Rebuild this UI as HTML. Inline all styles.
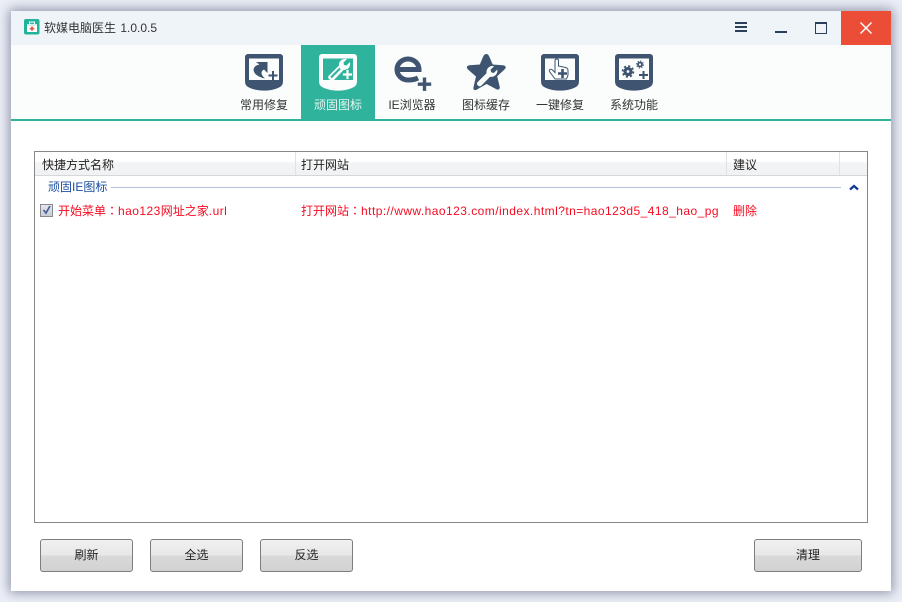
<!DOCTYPE html>
<html><head><meta charset="utf-8">
<style>
html,body{margin:0;padding:0}
body{width:902px;height:602px;overflow:hidden;position:relative;background:#eceff7;font-family:"Liberation Sans","WenQuanYi Zen Hei","Noto Sans CJK SC",sans-serif;font-size:12px;color:#222}
div{position:absolute;white-space:nowrap}
#win{left:11px;top:11px;width:880px;height:580px;background:#fff;box-shadow:0 0 11px 2px #8f95a8}
.tab{top:98px;width:74px;text-align:center;line-height:14px;color:#333}
.btn{top:539px;height:31px;border:1px solid #7d7d7d;border-radius:3px;background:linear-gradient(#f0f0f0 0,#e8e8e8 48%,#d9d9d9 52%,#d2d2d2 100%);text-align:center;line-height:31px;color:#222}
.l{letter-spacing:.45px}
.c{font-family:"Noto Sans CJK TC",sans-serif}
svg{position:absolute;overflow:visible}
</style></head><body>
<div id="win"></div>
<div style="left:11px;top:11px;width:880px;height:34px;background:#eff4f9"></div>
<div style="left:11px;top:45px;width:880px;height:74px;background:#fbfdfd"></div>
<div style="left:11px;top:119px;width:880px;height:2px;background:#2fb39c"></div>
<div style="left:301px;top:45px;width:74px;height:74px;background:#2fb39c"></div>

<svg style="left:24px;top:19px" width="16" height="16" viewBox="0 0 16 16"><rect width="15.5" height="15.5" rx="2" fill="#22b39b"/><rect x="3" y="5" width="10" height="8" fill="#fff"/><rect x="5.5" y="3" width="5" height="2.4" fill="none" stroke="#fff"/><rect x="3" y="5" width="10" height="2" fill="#d6f2ec"/><path d="M7.2 7.5h1.600v1.400h1.400v1.500H8.800v1.400H7.200v-1.400H5.800V8.900h1.400z" fill="#e8483a"/></svg>
<div style="left:44px;top:20px;line-height:16px;color:#333;word-spacing:1px">软媒电脑医生 1.0.0.5</div>

<svg style="left:735px;top:22px" width="12" height="10"><path d="M0 0h12v2H0zM0 4h12v2H0zM0 8h12v2H0z" fill="#2a3f5a"/></svg>
<div style="left:775px;top:31px;width:12px;height:2px;background:#2a3f5a"></div>
<div style="left:815px;top:22px;width:10px;height:9px;border:1px solid #2a3f5a;border-top-width:2px"></div>
<div style="left:841px;top:11px;width:50px;height:34px;background:#ec4d36"></div>
<svg style="left:860px;top:22px" width="12" height="12"><path d="M.5.500l11 11M11.500.500l-11 11" stroke="#fff" stroke-width="1.500" fill="none"/></svg>

<!-- icon 1 -->
<svg style="left:245px;top:54px" width="38" height="37" viewBox="0 0 38 37"><path d="M3 0h32a3 3 0 0 1 3 3v23c0 5-1 6-5 8-8 3.500-20 3.500-28 0-4-2-5-3-5-8V3a3 3 0 0 1 3-3z" fill="#3e5470"/><rect x="4" y="4.500" width="30" height="21.500" fill="#fbfdfd"/><path d="M11 8H22.500V19L19 15.500C16 17 15 20 20 24.500C13 23 7 19 9 14C10 12 12 11 14.500 10.500z" fill="#3e5470"/><path d="M27 17h2v3.500h3.500v2H29V26h-2v-3.500h-3.500v-2H27z" fill="#3e5470"/></svg>
<!-- icon 2 -->
<svg style="left:319px;top:54px" width="38" height="37" viewBox="0 0 38 37"><path d="M3 0h32a3 3 0 0 1 3 3v23c0 5-1 6-5 8-8 3.500-20 3.500-28 0-4-2-5-3-5-8V3a3 3 0 0 1 3-3z" fill="#fbfdfd"/><rect x="4" y="4.500" width="30" height="21.500" fill="#2fb39c"/><path d="M12 26c-2 0-3.500-2-2.500-4L20 11.500c-.500-4 3-7.500 8-6.500l-3.500 3.500.5 2.500 2.500.5 3.500-3.500c1 5-2.500 8.500-6.500 8L15 26z" fill="#fbfdfd"/><path d="M12 23.500L21 14.500" stroke="#2fb39c" stroke-width="2" fill="none"/><path d="M27 15.500h3v3.500h3.500v3H30v3.500h-3V22h-3.500v-3H27z" fill="#fbfdfd" stroke="#2fb39c" stroke-width=".8"/></svg>
<!-- icon 3 -->
<svg style="left:393px;top:54px" width="40" height="38" viewBox="0 0 40 38"><path d="M4 15.500H26A11 10.500 0 0 0 4 15.500A11 10.500 0 0 0 15 26C19 26 22 25.500 25 24" fill="none" stroke="#3e5470" stroke-width="5"/><path d="M29.800 23.500h3.400v5h5v3.400h-5v5h-3.400v-5h-5v-3.400h5z" fill="#3e5470"/></svg>
<!-- icon 4 star -->
<svg style="left:466px;top:53px" width="41" height="39" viewBox="0 0 41 39"><path d="M20.500 1c1.500 0 2.300 1.500 3.200 3.500l3 7 10 .8c3 .300 4 2 2 4l-7.500 7 2.500 10.500c.5 2.500-1.500 3.500-3.500 2.300L20.500 31l-9.500 5.500c-2.500 1.500-4 .2-3.500-2.300L10 23.500l-8-7c-2-2-1.200-3.800 1.500-4.200l10.300-.8 3.200-7.500c.9-2 1.700-3 3.500-3z" fill="#3e5470"/><path d="M12 32.500c-1.500-1.500-1.200-2.500 0-3.800l8.500-8.500c-.5-4 2.500-8 7.500-7l-3.500 3.500.7 2.600 2.600.7 3.500-3.500c.8 4.500-2.800 8-7.200 7.300L15.500 32.500c-1.200 1-2.300 1.200-3.500 0z" fill="#fbfdfd"/></svg>
<!-- icon 5 -->
<svg style="left:541px;top:54px" width="38" height="37" viewBox="0 0 38 37"><path d="M3 0h32a3 3 0 0 1 3 3v23c0 5-1 6-5 8-8 3.500-20 3.500-28 0-4-2-5-3-5-8V3a3 3 0 0 1 3-3z" fill="#3e5470"/><rect x="4" y="4.500" width="30" height="21.500" fill="#fbfdfd"/><path d="M14 25L8.500 17.500c-1-2 1.500-3 3-1.500l2.500 2.500V6.500c0-2 3.500-2 3.500 0V12l7 1.500c2 .5 2.500 1.500 2.500 3V21l-1.500 4z" fill="#fbfdfd" stroke="#3e5470" stroke-width="1"/><path d="M20.200 15h2.600v3.200H26v2.600h-3.200V24h-2.600v-3.200H17v-2.600h3.200z" fill="#3e5470"/></svg>
<!-- icon 6 -->
<svg style="left:615px;top:54px" width="38" height="37" viewBox="0 0 38 37"><path d="M3 0h32a3 3 0 0 1 3 3v23c0 5-1 6-5 8-8 3.500-20 3.500-28 0-4-2-5-3-5-8V3a3 3 0 0 1 3-3z" fill="#3e5470"/><rect x="4" y="4.500" width="30" height="21.500" fill="#fbfdfd"/><circle cx="13" cy="17.500" r="3" fill="none" stroke="#3e5470" stroke-width="3.200"/><circle cx="13" cy="17.500" r="5.400" fill="none" stroke="#3e5470" stroke-width="1.800" stroke-dasharray="2.100 2.140"/><circle cx="25" cy="10.500" r="2" fill="none" stroke="#3e5470" stroke-width="1.800"/><circle cx="25" cy="10.500" r="3.400" fill="none" stroke="#3e5470" stroke-width="1.100" stroke-dasharray="1.300 1.370"/><path d="M27.500 17h2v3h3.500v2h-3.500v3h-2v-3H24v-2h3.500z" fill="#3e5470"/></svg>

<div class="tab" style="left:227px">常用修复</div>
<div class="tab" style="left:301px;color:#e6f6f2">顽固图标</div>
<div class="tab" style="left:375px">IE浏览器</div>
<div class="tab" style="left:449px">图标缓存</div>
<div class="tab" style="left:523px">一键修复</div>
<div class="tab" style="left:597px">系统功能</div>

<!-- list -->
<div style="left:34px;top:151px;width:832px;height:370px;border:1px solid #888;background:#fff"></div>
<div style="left:35px;top:152px;width:832px;height:23px;background:linear-gradient(#fff 0,#fff 42%,#f3f4f5 45%,#f1f2f3 100%);border-bottom:1px solid #d5d7da"></div>
<div style="left:295px;top:152px;width:1px;height:23px;background:#e0e2e4"></div>
<div style="left:726px;top:152px;width:1px;height:23px;background:#e0e2e4"></div>
<div style="left:839px;top:152px;width:1px;height:23px;background:#e0e2e4"></div>
<div style="left:42px;top:158px;line-height:14px;color:#222">快捷方式名称</div>
<div style="left:301px;top:158px;line-height:14px;color:#222">打开网站</div>
<div style="left:733px;top:158px;line-height:14px;color:#222">建议</div>

<div style="left:48px;top:180px;line-height:14px;color:#1c4fa0">顽固IE图标</div>
<div style="left:111px;top:187px;width:730px;height:1px;background:#b3c3df"></div>
<svg style="left:849px;top:184px" width="10" height="7"><path d="M1 5.500L5 2 9 5.500" fill="none" stroke="#0f3a94" stroke-width="2.200"/></svg>

<div style="left:40px;top:204px;width:11px;height:11px;border:1px solid #8a8a8a;background:linear-gradient(#e4e6ec,#c9cdd8)"></div>
<svg style="left:42px;top:205px" width="10" height="10"><path d="M1.500 5l2.500 3L8 1" fill="none" stroke="#4a5f94" stroke-width="1.700"/></svg>
<div style="left:58px;top:204px;line-height:14px;color:#f80a20">开始菜单<span class="c">：</span><span class="l">hao123</span>网址之家<span class="l">.url</span></div>
<div style="left:301px;top:204px;line-height:14px;color:#f80a20">打开网站<span class="c">：</span><span class="l">http://www.hao123.com/index.html?tn=hao123d5_418_hao_pg</span></div>
<div style="left:733px;top:204px;line-height:14px;color:#f80a20">删除</div>

<div class="btn" style="left:40px;width:91px">刷新</div>
<div class="btn" style="left:150px;width:91px">全选</div>
<div class="btn" style="left:260px;width:91px">反选</div>
<div class="btn" style="left:754px;width:106px">清理</div>
</body></html>
